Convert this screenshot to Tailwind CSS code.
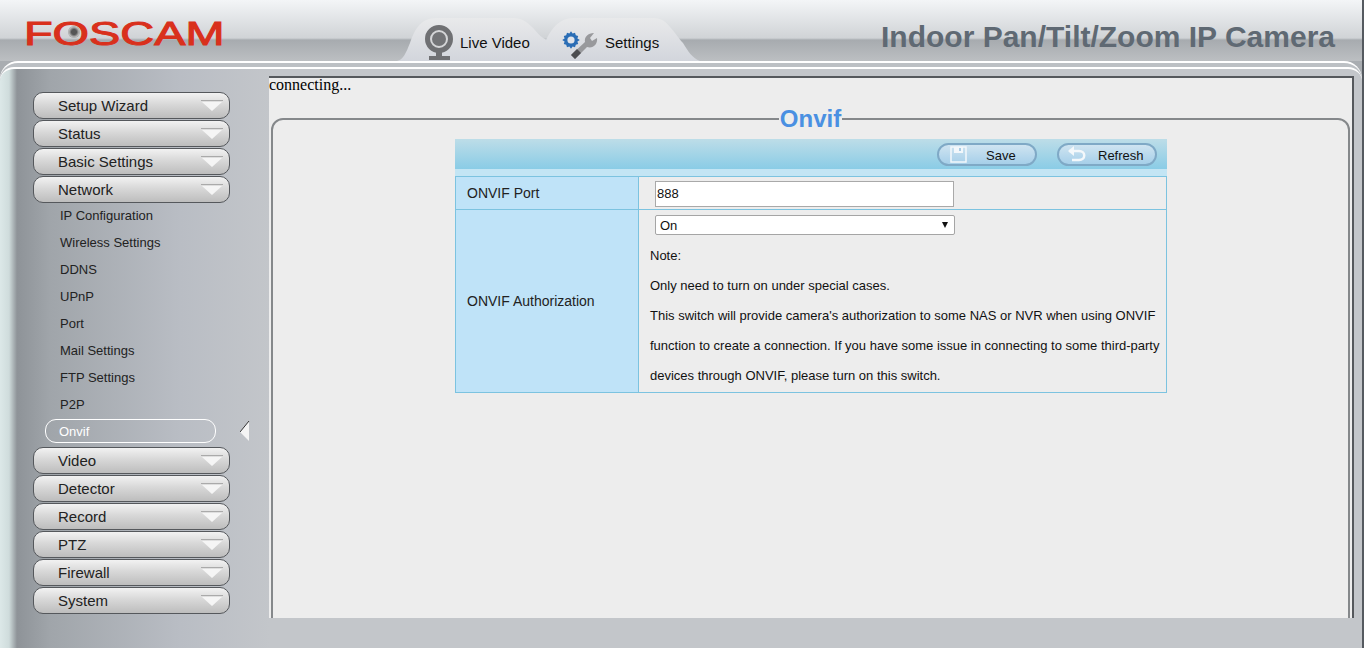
<!DOCTYPE html>
<html><head><meta charset="utf-8"><title>Onvif</title>
<script src="https://cdn.jsdelivr.net/npm/@tailwindcss/browser@4"></script></head>
<body class="overflow-hidden">
<div class="w-[1364px] h-[648px] overflow-hidden flex flex-col font-['Liberation_Sans',Arial,sans-serif] bg-[#a9adb1] border-r-2 border-[#555a60]">
  <!-- header -->
  <header class="h-[61px] shrink-0 flex items-start bg-[linear-gradient(180deg,#f3f5f7_0px,#d0d3d6_38px,#a7abaf_40px,#bcbfc2_61px)]">
    <div class="relative w-[195px] h-[61px] ml-[27px] shrink-0">
      <span class="absolute -left-[3px] top-[15px] origin-left scale-x-[1.42] font-['Liberation_Sans',sans-serif] text-[33px] leading-[38px] text-[#d9301c] [-webkit-text-stroke:1px_#d9301c]">FOSCAM</span>
      <span class="absolute left-[41px] top-[26px] w-3 h-3 rounded-full bg-[radial-gradient(circle,#555_30%,#bbb_60%,#666_100%)]"></span>
    </div>
    <nav class="flex h-[61px] ml-[175px] shrink-0">
      <div class="relative w-[153px] h-[61px]">
        <svg class="absolute left-0 top-[18px]" width="153" height="43" viewBox="0 0 153 43"><defs><linearGradient id="t" x1="0" y1="0" x2="0" y2="1"><stop offset="0" stop-color="#e9eaeb"/><stop offset="1" stop-color="#d2d5dc"/></linearGradient></defs><path d="M0 43C6 42 9 35 13 25C17 14 22 0 40 0H116C125 0 130 4 135 9C140 14 143 19 150 22V43Z" fill="url(#t)"/></svg>
        <svg class="absolute left-[26px] top-[24px]" width="32" height="37" viewBox="0 0 32 37"><circle cx="16" cy="15" r="11.5" fill="#d5d6d8" stroke="#6f7073" stroke-width="5"/><circle cx="16" cy="15" r="7" fill="#737477"/><rect x="13" y="28" width="6" height="5" fill="#6f7073"/><rect x="6" y="32" width="21" height="4" fill="#6f7073"/></svg>
        <span class="absolute left-[63px] top-[33px] text-[15px] leading-[20px] text-[#111]">Live Video</span>
      </div>
      <div class="relative w-[170px] h-[61px] -ml-[20px]">
        <svg class="absolute left-0 top-[18px]" width="170" height="43" viewBox="0 0 170 43"><path d="M0 43C6 41 12 30 17 20C22 10 30 0 43 0H123C132 0 136 4 140 9C146 16 150 22 153 25C158 33 162 40 170 43Z" fill="url(#t)"/></svg>
        <svg class="absolute left-[32px] top-[28px]" width="36" height="32" viewBox="0 0 36 32"><g transform="translate(-0.6 2.4) scale(0.8)"><path d="M12 1l2 3 3-1 1 3 3 1-1 3 3 2-3 2 1 3-3 1-1 3-3-1-2 3-2-3-3 1-1-3-3-1 1-3-3-2 3-2-1-3 3-1 1-3 3 1Z" fill="#2a6db5"/><circle cx="12" cy="12" r="4.5" fill="#dfe3ea"/></g><path d="M13 31l-4-4 14-13c-1-5 3-9 9-9l-4 5 2 3 5-3c1 6-4 11-10 9Z" fill="#98999c"/><path d="M13 31l-4-4 6-6 4 4Z" fill="#4c4d50"/></svg>
        <span class="absolute left-[75px] top-[33px] text-[15px] leading-[20px] text-[#111]">Settings</span>
      </div>
    </nav>
    <h1 class="ml-auto mr-[27px] mt-[19px] text-[30px] leading-[36px] font-bold text-[#5f6973] whitespace-nowrap">Indoor Pan/Tilt/Zoom IP Camera</h1>
  </header>
  <!-- main frame with double white arc -->
  <div class="flex-1 min-h-0 border-t-2 border-white rounded-t-[18px] bg-[#bcc0c4] pt-[4px]">
    <div class="h-[581px] border-t-2 border-white rounded-t-[14px] flex bg-[linear-gradient(90deg,#dce8e8_0px,#cfdcdc_9px,#8e9398_17px,#a0a5aa_50px,#b9bdc4_180px,#c3c6ca_270px)]">
      <aside class="w-[269px] shrink-0 pl-[33px] pt-[23px] flex flex-col">
        <div class="flex flex-col gap-[1px]">
          <div class="h-[27px] w-[197px] rounded-[10px] border border-[#55585c] bg-[linear-gradient(180deg,#f2f2f2,#d8d8d8_45%,#bdbdbd)] flex items-center justify-between pl-[24px] pr-[6px]"><span class="pt-[2px] text-[15px] text-[#222]">Setup Wizard</span><svg width="22" height="12" viewBox="0 0 22 12"><path d="M0 .5h22" stroke="#aaa"/><path d="M1 2h20L11 11Z" fill="#f5f5f5"/></svg></div>
          <div class="h-[27px] w-[197px] rounded-[10px] border border-[#55585c] bg-[linear-gradient(180deg,#f2f2f2,#d8d8d8_45%,#bdbdbd)] flex items-center justify-between pl-[24px] pr-[6px]"><span class="pt-[2px] text-[15px] text-[#222]">Status</span><svg width="22" height="12" viewBox="0 0 22 12"><path d="M0 .5h22" stroke="#aaa"/><path d="M1 2h20L11 11Z" fill="#f5f5f5"/></svg></div>
          <div class="h-[27px] w-[197px] rounded-[10px] border border-[#55585c] bg-[linear-gradient(180deg,#f2f2f2,#d8d8d8_45%,#bdbdbd)] flex items-center justify-between pl-[24px] pr-[6px]"><span class="pt-[2px] text-[15px] text-[#222]">Basic Settings</span><svg width="22" height="12" viewBox="0 0 22 12"><path d="M0 .5h22" stroke="#aaa"/><path d="M1 2h20L11 11Z" fill="#f5f5f5"/></svg></div>
          <div class="h-[27px] w-[197px] rounded-[10px] border border-[#55585c] bg-[linear-gradient(180deg,#f2f2f2,#d8d8d8_45%,#bdbdbd)] flex items-center justify-between pl-[24px] pr-[6px]"><span class="pt-[2px] text-[15px] text-[#222]">Network</span><svg width="22" height="12" viewBox="0 0 22 12"><path d="M0 .5h22" stroke="#aaa"/><path d="M1 2h20L11 11Z" fill="#f5f5f5"/></svg></div>
        </div>
        <ul class="pl-[27px] text-[13px] text-[#222] leading-[27px] mt-[-1px]">
          <li class="h-[27px]">IP Configuration</li>
          <li class="h-[27px]">Wireless Settings</li>
          <li class="h-[27px]">DDNS</li>
          <li class="h-[27px]">UPnP</li>
          <li class="h-[27px]">Port</li>
          <li class="h-[27px]">Mail Settings</li>
          <li class="h-[27px]">FTP Settings</li>
          <li class="h-[27px]">P2P</li>
        </ul>
        <div class="relative h-[25px] mt-[1px] mb-[3px]">
          <div class="ml-[12px] w-[171px] h-[24px] rounded-[11px] border border-white pl-[13px] text-[13px] leading-[24px] text-white">Onvif</div>
          <svg class="absolute left-[207px] top-[1px]" width="10" height="22" viewBox="0 0 10 22"><path d="M9 1V21L0 12Z" fill="#f4f4f4"/><path d="M9 1L0 12" stroke="#333" stroke-width="1" fill="none"/></svg>
        </div>
        <div class="flex flex-col gap-[1px]">
          <div class="h-[27px] w-[197px] rounded-[10px] border border-[#55585c] bg-[linear-gradient(180deg,#f2f2f2,#d8d8d8_45%,#bdbdbd)] flex items-center justify-between pl-[24px] pr-[6px]"><span class="pt-[2px] text-[15px] text-[#222]">Video</span><svg width="22" height="12" viewBox="0 0 22 12"><path d="M0 .5h22" stroke="#aaa"/><path d="M1 2h20L11 11Z" fill="#f5f5f5"/></svg></div>
          <div class="h-[27px] w-[197px] rounded-[10px] border border-[#55585c] bg-[linear-gradient(180deg,#f2f2f2,#d8d8d8_45%,#bdbdbd)] flex items-center justify-between pl-[24px] pr-[6px]"><span class="pt-[2px] text-[15px] text-[#222]">Detector</span><svg width="22" height="12" viewBox="0 0 22 12"><path d="M0 .5h22" stroke="#aaa"/><path d="M1 2h20L11 11Z" fill="#f5f5f5"/></svg></div>
          <div class="h-[27px] w-[197px] rounded-[10px] border border-[#55585c] bg-[linear-gradient(180deg,#f2f2f2,#d8d8d8_45%,#bdbdbd)] flex items-center justify-between pl-[24px] pr-[6px]"><span class="pt-[2px] text-[15px] text-[#222]">Record</span><svg width="22" height="12" viewBox="0 0 22 12"><path d="M0 .5h22" stroke="#aaa"/><path d="M1 2h20L11 11Z" fill="#f5f5f5"/></svg></div>
          <div class="h-[27px] w-[197px] rounded-[10px] border border-[#55585c] bg-[linear-gradient(180deg,#f2f2f2,#d8d8d8_45%,#bdbdbd)] flex items-center justify-between pl-[24px] pr-[6px]"><span class="pt-[2px] text-[15px] text-[#222]">PTZ</span><svg width="22" height="12" viewBox="0 0 22 12"><path d="M0 .5h22" stroke="#aaa"/><path d="M1 2h20L11 11Z" fill="#f5f5f5"/></svg></div>
          <div class="h-[27px] w-[197px] rounded-[10px] border border-[#55585c] bg-[linear-gradient(180deg,#f2f2f2,#d8d8d8_45%,#bdbdbd)] flex items-center justify-between pl-[24px] pr-[6px]"><span class="pt-[2px] text-[15px] text-[#222]">Firewall</span><svg width="22" height="12" viewBox="0 0 22 12"><path d="M0 .5h22" stroke="#aaa"/><path d="M1 2h20L11 11Z" fill="#f5f5f5"/></svg></div>
          <div class="h-[27px] w-[197px] rounded-[10px] border border-[#55585c] bg-[linear-gradient(180deg,#f2f2f2,#d8d8d8_45%,#bdbdbd)] flex items-center justify-between pl-[24px] pr-[6px]"><span class="pt-[2px] text-[15px] text-[#222]">System</span><svg width="22" height="12" viewBox="0 0 22 12"><path d="M0 .5h22" stroke="#aaa"/><path d="M1 2h20L11 11Z" fill="#f5f5f5"/></svg></div>
        </div>
      </aside>
      <main class="w-[1085px] h-[542px] mt-[7px] shrink-0 bg-[#ededed] border-t-2 border-r-2 border-[#55585c] overflow-hidden">
        <p class="font-['Liberation_Serif',serif] text-[16px] leading-[14px] text-black">connecting...</p>
        <fieldset class="ml-[2px] mt-[13px] w-[1079px] h-[600px] border-2 border-[#85888b] rounded-[12px]">
          <legend class="mx-auto px-[1px] text-[24px] leading-[28px] font-bold text-[#4a90e2]">Onvif</legend>
          <div class="w-[712px] ml-[182px] mt-[6px]">
            <div class="h-[30px] flex items-center justify-end gap-[20px] pr-[10px] bg-[linear-gradient(180deg,#bddde8,#8acce6)]">
              <div class="w-[100px] h-[23px] rounded-full border-2 border-[#7fa9c6] bg-[linear-gradient(180deg,#cfe4f1,#a6cfe9)] flex items-center relative text-[13px] text-[#111]">
                <svg class="absolute left-[11px] top-[1px]" width="17" height="17" viewBox="0 0 17 17"><path d="M1 1h15v15H1Z" fill="none" stroke="#f2f7fb" stroke-width="1.5"/><path d="M4 1h9v6H4Z" fill="#f2f7fb"/><rect x="9" y="2" width="2" height="3" fill="#a9cce4"/></svg>
                <span class="ml-[47px] pt-[4px]">Save</span>
              </div>
              <div class="w-[100px] h-[23px] rounded-full border-2 border-[#7fa9c6] bg-[linear-gradient(180deg,#cfe4f1,#a6cfe9)] flex items-center relative text-[13px] text-[#111]">
                <svg class="absolute left-[8px] top-[1px]" width="20" height="17" viewBox="0 0 20 17"><path d="M2 5h10c7 0 7 9 0 9H5" fill="none" stroke="#f4f8fb" stroke-width="2.5"/><path d="M7 0v10L1 5Z" fill="#f4f8fb"/></svg>
                <span class="ml-[39px] pt-[4px]">Refresh</span>
              </div>
            </div>
            <div class="h-[7px] bg-[#c3e5f4]"></div>
            <div class="border border-[#7cc3e0] text-[14px] text-[#222] grid grid-cols-[183px_1fr]">
              <div class="h-[33px] bg-[#bfe3f8] border-r border-b border-[#7cc3e0] pl-[11px] leading-[33px]">ONVIF Port</div>
              <div class="h-[33px] border-b border-[#7cc3e0] pl-[16px] pt-[4px]">
                <input value="888" class="block w-[299px] h-[26px] bg-white border border-[#a9a9a9] px-[1px] pb-[2px] text-[13px] text-[#111] font-['Liberation_Sans',sans-serif]">
              </div>
              <div class="h-[182px] bg-[#bfe3f8] border-r border-[#7cc3e0] pl-[11px] leading-[183px]">ONVIF Authorization</div>
              <div class="h-[182px] pt-[5px] pl-[11px] text-[13px] text-[#111]">
                <div class="relative ml-[5px] w-[300px] h-[20px] bg-white border border-[#a5a5a5] rounded-[2px] pl-[4px] text-[13px] leading-[20px]">On<svg class="absolute right-[6px] top-[6px]" width="6" height="6" viewBox="0 0 6 6"><path d="M0 0h6L3 6Z" fill="#111"/></svg></div>
                <div class="leading-[30px] mt-[6px]">
                  <p>Note:</p>
                  <p>Only need to turn on under special cases.</p>
                  <p class="whitespace-nowrap">This switch will provide camera's authorization to some NAS or NVR when using ONVIF</p>
                  <p class="whitespace-nowrap">function to create a connection. If you have some issue in connecting to some third-party</p>
                  <p>devices through ONVIF, please turn on this switch.</p>
                </div>
              </div>
            </div>
          </div>
        </fieldset>
      </main>
    </div>
  </div>
</div>
</body></html>
